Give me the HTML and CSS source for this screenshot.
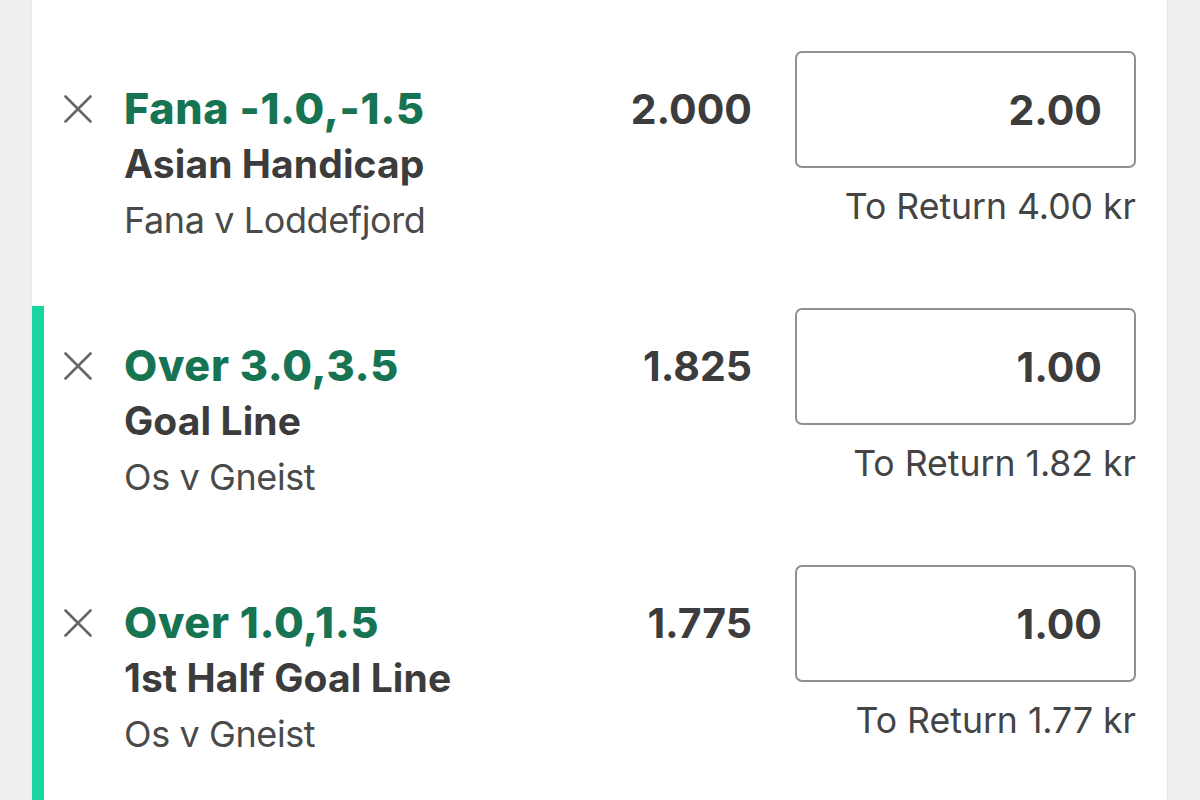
FILE: index.html
```html
<!DOCTYPE html>
<html lang="en">
<head>
<meta charset="utf-8">
<title>Bet Slip</title>
<link rel="stylesheet" href="styles.css">
</head>
<body>
<div class="slip">
  <div class="bet">
    <div class="remove"><svg viewBox="0 0 28 28" width="28" height="28"><path d="M1.5 1.5 L26.5 26.5 M26.5 1.5 L1.5 26.5" stroke="#666" stroke-width="2.6" fill="none" stroke-linecap="round"/></svg></div>
    <div class="info">
      <div class="selection">Fana -1.0,-1.5</div>
      <div class="market">Asian Handicap</div>
      <div class="event">Fana v Loddefjord</div>
    </div>
    <div class="odds">2.000</div>
    <div class="stake">
      <div class="stake-box">2.00</div>
      <div class="returns">To Return&nbsp;4.00 kr</div>
    </div>
  </div>
  <div class="bet selected">
    <div class="remove"><svg viewBox="0 0 28 28" width="28" height="28"><path d="M1.5 1.5 L26.5 26.5 M26.5 1.5 L1.5 26.5" stroke="#666" stroke-width="2.6" fill="none" stroke-linecap="round"/></svg></div>
    <div class="info">
      <div class="selection">Over 3.0,3.5</div>
      <div class="market">Goal Line</div>
      <div class="event">Os v Gneist</div>
    </div>
    <div class="odds">1.825</div>
    <div class="stake">
      <div class="stake-box">1.00</div>
      <div class="returns">To Return&nbsp;1.82 kr</div>
    </div>
  </div>
  <div class="bet selected">
    <div class="remove"><svg viewBox="0 0 28 28" width="28" height="28"><path d="M1.5 1.5 L26.5 26.5 M26.5 1.5 L1.5 26.5" stroke="#666" stroke-width="2.6" fill="none" stroke-linecap="round"/></svg></div>
    <div class="info">
      <div class="selection">Over 1.0,1.5</div>
      <div class="market">1st Half Goal Line</div>
      <div class="event">Os v Gneist</div>
    </div>
    <div class="odds">1.775</div>
    <div class="stake">
      <div class="stake-box">1.00</div>
      <div class="returns">To Return&nbsp;1.77 kr</div>
    </div>
  </div>
</div>
</body>
</html>
```

FILE: styles.css
```css
html, body {
  margin: 0;
  padding: 0;
}
body {
  background: #efefef;
  font-family: Inter, "Noto Sans", sans-serif;
  color: #3e3e3e;
  height: 800px;
  overflow: hidden;
}
.slip {
  margin: 0 33px 0 32px;
  background: #fff;
  height: 800px;
  overflow: hidden;
  box-sizing: border-box;
  padding-top: 49px;
  box-shadow: 0 0 3px rgba(0, 0, 0, 0.08);
}
.bet {
  display: flex;
  align-items: flex-start;
  height: 257px;
  box-sizing: border-box;
  padding: 2px 31px 0 20px;
  border-left: 12px solid transparent;
}
.bet.selected {
  border-left-color: #17d6a0;
}
.remove {
  width: 28px;
  height: 116px;
  display: flex;
  align-items: center;
}
.remove svg {
  display: block;
}
.info {
  flex: 1;
  margin-left: 32px;
  padding-top: 29px;
}
.selection {
  font-size: 43px;
  font-weight: 800;
  line-height: 56px;
  color: #167453;
  letter-spacing: 0.7px;
}
.market {
  font-size: 39px;
  font-weight: 700;
  line-height: 56px;
  color: #3c3c3c;
  letter-spacing: 0.1px;
}
.event {
  font-size: 36px;
  font-weight: 400;
  line-height: 56px;
  color: #4a4a4a;
  letter-spacing: -0.4px;
}
.odds {
  font-size: 41px;
  font-weight: 700;
  line-height: 116px;
  color: #3c3c3c;
  margin-right: 43px;
}
.stake {
  width: 341px;
  display: flex;
  flex-direction: column;
  align-items: flex-end;
}
.stake-box {
  width: 100%;
  box-sizing: border-box;
  height: 117px;
  border: 2px solid #909090;
  border-radius: 7px;
  display: flex;
  align-items: center;
  justify-content: flex-end;
  padding-right: 32px;
  font-size: 41px;
  font-weight: 700;
  color: #3c3c3c;
}
.returns {
  margin-top: 19px;
  font-size: 35.6px;
  line-height: 40px;
  color: #444;
}
```
